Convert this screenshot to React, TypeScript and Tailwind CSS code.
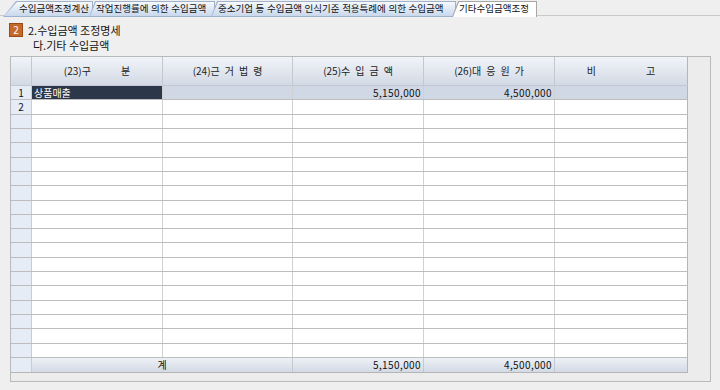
import React from "react";

const FONT = "font-['Noto_Sans_CJK_KR','Noto_Sans',sans-serif]";

type TabProps = { label: string; w: string; active?: boolean; first?: boolean };

function Tab({ label, w, active, first }: TabProps) {
  const clip = first
    ? "[clip-path:polygon(13px_0,100%_0,100%_100%,0_100%)]"
    : "[clip-path:polygon(6px_0,100%_0,100%_100%,0_100%)]";
  return (
    <div className={`relative h-[16px] shrink-0 ${w} ${first ? "" : "-ml-[4px]"} ${active ? "z-10" : ""}`}>
      <div className={`absolute inset-0 ${active ? "bg-[#a7a7a7]" : "bg-[#9fb2cb]"} ${clip}`} />
      <div
        className={`absolute left-[1px] right-[1px] top-[1px] ${active ? "bottom-0 bg-white" : "bottom-[1px] bg-gradient-to-b from-[#f6f9fd] to-[#c8d8ec]"} ${clip}`}
      />
      <span
        className={`relative flex h-full items-center overflow-hidden ${first ? "pl-[16px]" : "pl-[7px]"} text-[9.5px] [word-spacing:0.5px] leading-none text-[#111] whitespace-pre`}
      >
        {label}
      </span>
    </div>
  );
}

const COLS = [
  "w-[21px]",
  "w-[131px]",
  "w-[130px]",
  "w-[131px]",
  "w-[131px]",
  "w-[133px]",
];

function HeaderCell({ children, cls }: { children?: React.ReactNode; cls: string }) {
  return (
    <div
      className={`${cls} h-full shrink-0 border-r border-[#c3c9d3] bg-gradient-to-b from-[#f1f4f9] to-[#d3dae5] flex items-center justify-center text-[10px] text-[#222] leading-none whitespace-pre`}
    >
      {children}
    </div>
  );
}

function Spaced({ parts, gap }: { parts: string[]; gap: string }) {
  return (
    <div className={`flex items-center ${gap}`}>
      {parts.map((p, i) => (
        <span key={i}>{p}</span>
      ))}
    </div>
  );
}

export default function App() {
  const rowCount = 19;
  const rows = Array.from({ length: rowCount }, (_, i) => i);
  const heightOf = (i: number) => Math.round(((i + 1) * 272) / rowCount) - Math.round((i * 272) / rowCount);

  return (
    <div className={`w-[720px] h-[390px] bg-[#efefef] overflow-hidden ${FONT} text-[#111]`}>
      {/* Tabs */}
      <div className="relative h-[17px] pt-[1px]">
        <div className="absolute left-0 right-0 bottom-[1px] h-px bg-[#c9c9c9]" />
        <div className="relative flex pl-[3px]">
          <Tab label="수입금액조정계산" w="w-[90px]" first />
          <Tab label="작업진행률에 의한 수입금액" w="w-[126px]" />
          <Tab label="중소기업 등 수입금액 인식기준 적용특례에 의한 수입금액" w="w-[245px]" />
          <Tab label="기타수입금액조정" w="w-[85px]" active />
        </div>
      </div>

      {/* Title */}
      <div className="pl-[9px] pt-[6px]">
        <div className="flex items-center h-[14px]">
          <div className="w-[14px] h-[14px] bg-[#c5692b] border border-[#9a4b17] flex items-center justify-center text-white text-[10px] leading-none">
            2
          </div>
          <span className="ml-[5px] text-[11px] leading-none text-[#111]">2.수입금액 조정명세</span>
        </div>
        <div className="ml-[24px] mt-[1px] h-[14px] flex items-center text-[11px] leading-none text-[#111]">다.기타 수입금액</div>
      </div>

      {/* Grid frame */}
      <div className="ml-[10px] mt-[4px] w-[701px] h-[326px] border border-[#b9b9b9] bg-[#ececec] flex flex-col">
        {/* header */}
        <div className="flex h-[29px] shrink-0">
          <div className="flex w-[677px] border-b border-[#c3c9d3]">
            <HeaderCell cls={COLS[0]} />
            <HeaderCell cls={COLS[1]}>
              <Spaced parts={["(23)구", "분"]} gap="gap-[30px]" />
            </HeaderCell>
            <HeaderCell cls={COLS[2]}>
              <Spaced parts={["(24)근", "거", "법", "령"]} gap="gap-[5px]" />
            </HeaderCell>
            <HeaderCell cls={COLS[3]}>
              <Spaced parts={["(25)수", "입", "금", "액"]} gap="gap-[5px]" />
            </HeaderCell>
            <HeaderCell cls={COLS[4]}>
              <Spaced parts={["(26)대", "응", "원", "가"]} gap="gap-[5px]" />
            </HeaderCell>
            <HeaderCell cls={`${COLS[5]} border-r-[#b5b5b5]`}>
              <Spaced parts={["비", "고"]} gap="gap-[50px]" />
            </HeaderCell>
          </div>
          <div className="flex-1" />
        </div>

        {/* data rows */}
        <div className="flex flex-col w-[677px] shrink-0">
          {rows.map((i) => {
            const h = heightOf(i) === 15 ? "h-[15px]" : "h-[14px]";
            const first = i === 0;
            return (
              <div key={i} className={`flex ${h} border-b border-[#bdbdbd]`}>
                <div className={`${COLS[0]} shrink-0 border-r border-[#c6cdd8] bg-[#e6ecf6] flex items-center justify-center text-[10px] leading-none`}>
                  {i < 2 ? String(i + 1) : ""}
                </div>
                <div
                  className={`${COLS[1]} shrink-0 border-r border-[#d0d0d0] flex items-center pl-[2px] text-[10px] leading-none ${first ? "bg-[#2c374a] text-white" : "bg-white"}`}
                >
                  {first ? "상품매출" : ""}
                </div>
                <div className={`${COLS[2]} shrink-0 border-r border-[#d0d0d0] ${first ? "bg-[#d0d8e5]" : "bg-white"}`} />
                <div
                  className={`${COLS[3]} shrink-0 border-r border-[#d0d0d0] flex items-center justify-end pr-[2px] text-[10px] leading-none tracking-[0.4px] ${first ? "bg-[#d0d8e5]" : "bg-white"}`}
                >
                  {first ? "5,150,000" : ""}
                </div>
                <div
                  className={`${COLS[4]} shrink-0 border-r border-[#d0d0d0] flex items-center justify-end pr-[2px] text-[10px] leading-none tracking-[0.4px] ${first ? "bg-[#d0d8e5]" : "bg-white"}`}
                >
                  {first ? "4,500,000" : ""}
                </div>
                <div className={`${COLS[5]} shrink-0 border-r border-[#b5b5b5] ${first ? "bg-[#d0d8e5]" : "bg-white"}`} />
              </div>
            );
          })}
        </div>

        {/* total row */}
        <div className="flex h-[15px] w-[677px] shrink-0 border-b border-[#b5b5b5]">
          <div className={`${COLS[0]} shrink-0 border-r border-[#c6cdd8] bg-[#e6ecf6]`} />
          <div className="w-[261px] shrink-0 border-r border-[#c3c9d3] bg-gradient-to-b from-[#eef1f6] to-[#d3dae5] flex items-center justify-center text-[10px] leading-none">
            계
          </div>
          <div className={`${COLS[3]} shrink-0 border-r border-[#c3c9d3] bg-gradient-to-b from-[#eef1f6] to-[#d3dae5] flex items-center justify-end pr-[2px] text-[10px] leading-none tracking-[0.4px]`}>
            5,150,000
          </div>
          <div className={`${COLS[4]} shrink-0 border-r border-[#c3c9d3] bg-gradient-to-b from-[#eef1f6] to-[#d3dae5] flex items-center justify-end pr-[2px] text-[10px] leading-none tracking-[0.4px]`}>
            4,500,000
          </div>
          <div className={`${COLS[5]} shrink-0 border-r border-[#b5b5b5] bg-gradient-to-b from-[#eef1f6] to-[#d3dae5]`} />
        </div>
        <div className="flex-1" />
      </div>
    </div>
  );
}
